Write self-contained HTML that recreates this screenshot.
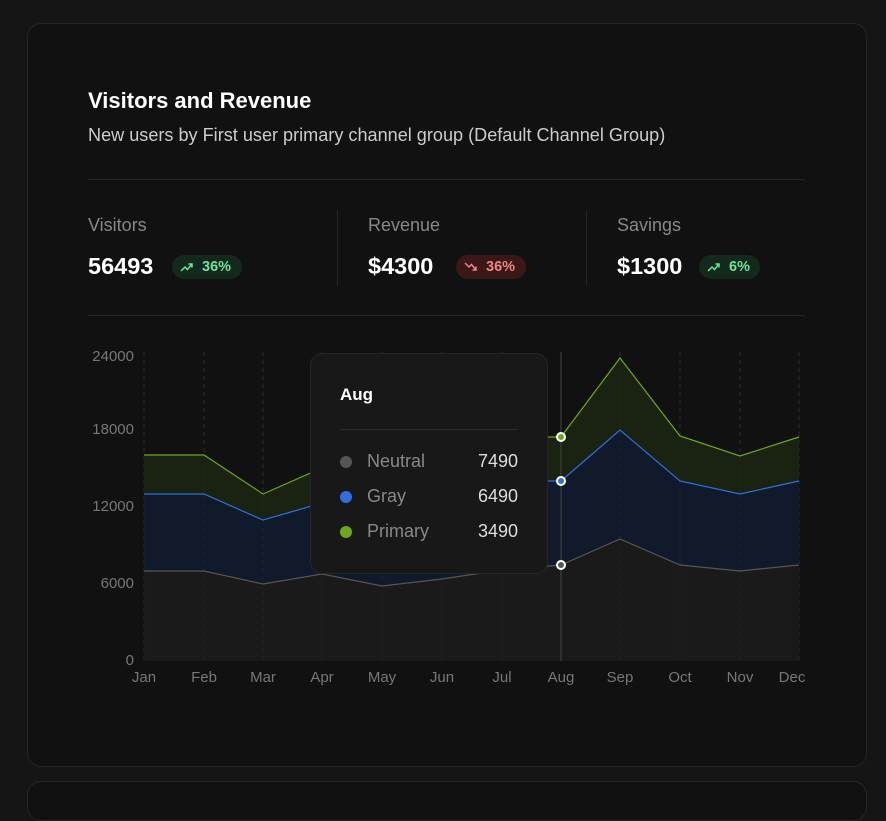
<!DOCTYPE html>
<html><head><meta charset="utf-8"><style>
*{margin:0;padding:0;box-sizing:border-box}
body{width:886px;height:785px;background:#151515;font-family:"Liberation Sans",sans-serif;position:relative;overflow:hidden}
.card{position:absolute;left:27px;top:23px;width:840px;height:744px;background:#111;border:1px solid #262626;border-radius:14px}
.card2{position:absolute;left:27px;top:781px;width:840px;height:40px;background:#111;border:1px solid #262626;border-radius:14px}
.a{position:absolute;white-space:nowrap}
.badge{position:absolute;height:24px;border-radius:12px;font-size:14.5px;font-weight:bold;line-height:24px;padding-left:30px;padding-right:8px}
.g{background:#13291b;color:#6ee39a}.r{background:#3a1818;color:#f08585}
.badge svg{position:absolute;left:8px;top:6px}
.yl{position:absolute;left:78px;width:56px;text-align:right;font-size:15px;color:#777}
.xl{position:absolute;top:669px;font-size:15px;color:#777;transform:translateX(-50%)}
.lbl{font-size:18px;color:#888}
.num{font-size:23.5px;font-weight:bold;color:#fff}
.tt{font-size:18px}
</style></head><body>
<div class="card"></div><div class="card2"></div>
<div class="a" style="left:88px;top:88px;font-size:22px;font-weight:bold;color:#fff">Visitors and Revenue</div>
<div class="a" style="left:88px;top:125px;font-size:18.1px;color:#ccc">New users by First user primary channel group (Default Channel Group)</div>
<div class="a" style="left:88px;top:179px;width:717px;height:1px;background:#262626"></div>
<div class="a" style="left:88px;top:315px;width:717px;height:1px;background:#262626"></div>
<div class="a" style="left:337px;top:210px;width:1px;height:76px;background:#262626"></div>
<div class="a" style="left:586px;top:210px;width:1px;height:76px;background:#262626"></div>
<div class="a lbl" style="left:88px;top:215px">Visitors</div>
<div class="a lbl" style="left:368px;top:215px">Revenue</div>
<div class="a lbl" style="left:617px;top:215px">Savings</div>
<div class="a num" style="left:88px;top:253px">56493</div>
<div class="a num" style="left:368px;top:253px">$4300</div>
<div class="a num" style="left:617px;top:253px">$1300</div>
<div class="badge g" style="left:172px;top:255px;width:70px"><svg width="14" height="12" viewBox="0 0 14 12" fill="none" stroke="#6ee39a" stroke-width="1.5"><path d="M1 10l4-4 2.5 2.5L12 3M8.5 3H12v3.5"/></svg>36%</div>
<div class="badge r" style="left:456px;top:255px;width:70px"><svg width="14" height="12" viewBox="0 0 14 12" fill="none" stroke="#f08585" stroke-width="1.5"><path d="M1 2l4 4 2.5-2.5L12 9M8.5 9H12V5.5"/></svg>36%</div>
<div class="badge g" style="left:699px;top:255px;width:61px"><svg width="14" height="12" viewBox="0 0 14 12" fill="none" stroke="#6ee39a" stroke-width="1.5"><path d="M1 10l4-4 2.5 2.5L12 3M8.5 3H12v3.5"/></svg>6%</div>

<div class="yl" style="top:348px">24000</div>
<div class="yl" style="top:421px">18000</div>
<div class="yl" style="top:498px">12000</div>
<div class="yl" style="top:575px">6000</div>
<div class="yl" style="top:652px">0</div>

<svg class="a" style="left:0;top:0" width="886" height="785">
<g stroke="#333" stroke-dasharray="4 4" stroke-width="1">
<path d="M144 352V661M204 352V661M263 352V661M322 352V661M382 352V661M442 352V661M502 352V661M620 352V661M680 352V661M740 352V661M799 352V661"/>
</g>
<polygon fill="#1a1a1a" points="144,571 204,571 263,584 322,574 382,586 442,579 502,570 561,565 620,539 680,565 740,571 799,565 799,661 144,661"/>
<polygon fill="#111a2b" points="144,494 204,494 263,520 322,503 382,500 442,495 502,481 561,481 620,430 680,481 740,494 799,481 799,565 740,571 680,565 620,539 561,565 502,570 442,579 382,586 322,574 263,584 204,571 144,571"/>
<polygon fill="#1a2211" points="144,455 204,455 263,494 322,468 382,450 442,445 502,437 561,437 620,358 680,436 740,456 799,437 799,481 740,494 680,481 620,430 561,481 502,481 442,495 382,500 322,503 263,520 204,494 144,494"/>
<g stroke="#2a2a2a" stroke-dasharray="4 4" stroke-width="1" opacity="0.6">
<path d="M144 352V661M204 352V661M263 352V661M322 352V661M382 352V661M442 352V661M502 352V661M620 352V661M680 352V661M740 352V661M799 352V661"/>
</g>
<polyline fill="none" stroke="#555" stroke-width="1.2" points="144,571 204,571 263,584 322,574 382,586 442,579 502,570 561,565 620,539 680,565 740,571 799,565"/>
<polyline fill="none" stroke="#2f6fe0" stroke-width="1.2" points="144,494 204,494 263,520 322,503 382,500 442,495 502,481 561,481 620,430 680,481 740,494 799,481"/>
<polyline fill="none" stroke="#6ea91a" stroke-width="1.2" points="144,455 204,455 263,494 322,468 382,450 442,445 502,437 561,437 620,358 680,436 740,456 799,437"/>
<line x1="561" y1="352" x2="561" y2="661" stroke="#444"/>
<circle cx="561" cy="437" r="4" fill="#6ea91a" stroke="#fff" stroke-width="2"/>
<circle cx="561" cy="481" r="4" fill="#2f6fe0" stroke="#fff" stroke-width="2"/>
<circle cx="561" cy="565" r="4" fill="#555" stroke="#fff" stroke-width="2"/>
</svg>
<div class="xl" style="left:144px">Jan</div><div class="xl" style="left:204px">Feb</div><div class="xl" style="left:263px">Mar</div><div class="xl" style="left:322px">Apr</div><div class="xl" style="left:382px">May</div><div class="xl" style="left:442px">Jun</div><div class="xl" style="left:502px">Jul</div><div class="xl" style="left:561px">Aug</div><div class="xl" style="left:620px">Sep</div><div class="xl" style="left:680px">Oct</div><div class="xl" style="left:740px">Nov</div><div class="xl" style="left:792px">Dec</div>

<div class="a" style="left:310px;top:353px;width:238px;height:221px;background:#181818;border:1px solid #262626;border-radius:12px">
<div class="a" style="left:29px;top:31px;font-size:17px;font-weight:bold;color:#fff">Aug</div>
<div class="a" style="left:29px;top:75px;width:178px;height:1px;background:#2a2a2a"></div>
<div class="a" style="left:29px;top:102px;width:12px;height:12px;border-radius:6px;background:#555"></div>
<div class="a" style="left:29px;top:137px;width:12px;height:12px;border-radius:6px;background:#2f6fe0"></div>
<div class="a" style="left:29px;top:172px;width:12px;height:12px;border-radius:6px;background:#6ea91a"></div>
<div class="a tt" style="left:56px;top:97px;color:#888">Neutral</div>
<div class="a tt" style="left:56px;top:132px;color:#888">Gray</div>
<div class="a tt" style="left:56px;top:167px;color:#888">Primary</div>
<div class="a tt" style="right:29px;top:97px;color:#ddd">7490</div>
<div class="a tt" style="right:29px;top:132px;color:#ddd">6490</div>
<div class="a tt" style="right:29px;top:167px;color:#ddd">3490</div>
</div>
</body></html>
